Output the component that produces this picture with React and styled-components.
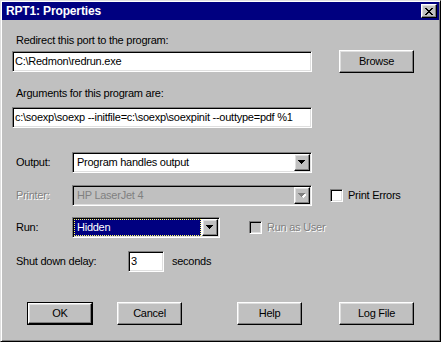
import React from 'react';
import styled, { createGlobalStyle, css } from 'styled-components';

const Global = createGlobalStyle`
  html, body { margin: 0; padding: 0; background: #c0c0c0; }
  body {
    font-family: "Liberation Sans", Arial, sans-serif;
    font-size: 11px;
    letter-spacing: -0.25px;
    color: #000;
  }
  * { box-sizing: border-box; }
`;

const sunken = css`
  border: 1px solid;
  border-color: #808080 #fff #fff #808080;
  box-shadow: inset 1px 1px #000, inset -1px -1px #dfdfdf;
`;

const raised = css`
  border: 1px solid;
  border-color: #fff #000 #000 #fff;
  box-shadow: inset -1px -1px #808080, inset 1px 1px #dfdfdf;
`;

const Window = styled.div`
  width: 441px;
  height: 342px;
  background: #c0c0c0;
  border: 1px solid;
  border-color: #dfdfdf #000 #000 #dfdfdf;
  box-shadow: inset 1px 1px #fff, inset -1px -1px #808080;
  padding: 1px;
  display: flex;
  flex-direction: column;
`;

const TitleBar = styled.div`
  height: 18px;
  background: #000080;
  display: flex;
  align-items: center;
  justify-content: space-between;
  padding: 0 2px 0 4px;
`;

const TitleText = styled.span`
  color: #fff;
  font-weight: bold;
  font-size: 12px;
  letter-spacing: -0.15px;
  line-height: 18px;
`;

const CloseButton = styled.div`
  ${raised}
  width: 16px;
  height: 14px;
  background: #c0c0c0;
  display: flex;
  align-items: center;
  justify-content: center;
`;

const Body = styled.div`
  padding: 14px 0 0 10px;
  display: flex;
  flex-direction: column;
  align-items: flex-start;
`;

const Caption = styled.div`
  line-height: 13px;
  height: 13px;
  padding-left: 4px;
  margin-top: ${p => p.$mt || 0}px;
  white-space: nowrap;
`;

const Row = styled.div`
  display: flex;
  align-items: center;
  margin-top: ${p => p.$mt || 0}px;
  height: ${p => p.$h || 21}px;
`;

const FieldLabel = styled.div`
  width: ${p => p.$w}px;
  padding-left: 4px;
  line-height: 13px;
  white-space: nowrap;
  color: ${p => (p.$disabled ? '#808080' : '#000')};
  text-shadow: ${p => (p.$disabled ? '1px 1px #fff' : 'none')};
`;

const TextField = styled.div`
  ${sunken}
  width: ${p => p.$w}px;
  height: 21px;
  margin-top: ${p => p.$mt || 0}px;
  background: #fff;
  padding: 0 2px;
  display: flex;
  align-items: center;
  white-space: nowrap;
  overflow: hidden;
  line-height: 13px;
`;

const Combo = styled.div`
  ${sunken}
  width: ${p => p.$w}px;
  height: 21px;
  padding: 1px;
  background: ${p => (p.$disabled ? '#c0c0c0' : '#fff')};
  display: flex;
`;

const ComboText = styled.div`
  flex: 1;
  display: flex;
  align-items: center;
  padding-left: 3px;
  margin-right: 1px;
  white-space: nowrap;
  overflow: hidden;
  line-height: 13px;
  color: ${p => (p.$disabled ? '#808080' : p.$focused ? '#fff' : '#000')};
  background: ${p => (p.$focused ? '#000080' : 'transparent')};
  outline: ${p => (p.$focused ? '1px dotted #ffff60' : 'none')};
  outline-offset: -1px;
`;

const DropButton = styled.div`
  ${raised}
  width: 16px;
  height: 100%;
  background: #c0c0c0;
  display: flex;
  align-items: center;
  justify-content: center;
`;

const CheckRow = styled.div`
  display: flex;
  align-items: center;
  margin-left: ${p => p.$ml}px;
`;

const CheckBox = styled.div`
  ${sunken}
  width: 13px;
  height: 13px;
  background: ${p => (p.$disabled ? '#c0c0c0' : '#fff')};
`;

const CheckLabel = styled.span`
  margin-left: 5px;
  line-height: 13px;
  white-space: nowrap;
  color: ${p => (p.$disabled ? '#808080' : '#000')};
  text-shadow: ${p => (p.$disabled ? '1px 1px #fff' : 'none')};
`;

const Suffix = styled.span`
  margin-left: 8px;
  line-height: 13px;
`;

const Button = styled.div`
  ${raised}
  width: ${p => p.$w}px;
  height: ${p => p.$h || 23}px;
  margin-left: ${p => p.$ml || 0}px;
  background: #c0c0c0;
  display: flex;
  align-items: center;
  justify-content: center;
  line-height: 13px;
`;

const DefaultFrame = styled.div`
  border: 1px solid #000;
  margin-left: ${p => p.$ml || 0}px;
  display: flex;
`;

const Arrow = ({ disabled }) => (
  <svg width="8" height="5" viewBox="0 0 8 5" shapeRendering="crispEdges">
    {disabled && <path d="M2 1h7v1H2zM3 2h5v1H3zM4 3h3v1H4zM5 4h1v1H5z" fill="#fff" />}
    <path
      d="M0 0h7v1H0zM1 1h5v1H1zM2 2h3v1H2zM3 3h1v1H3z"
      fill={disabled ? '#808080' : '#000'}
    />
  </svg>
);

const CloseGlyph = () => (
  <svg width="8" height="7" viewBox="0 0 8 7" shapeRendering="crispEdges">
    <path
      d="M0 0h2v1H0zM6 0h2v1H6zM1 1h2v1H1zM5 1h2v1H5zM2 2h4v1H2zM3 3h2v1H3zM2 4h4v1H2zM1 5h2v1H1zM5 5h2v1H5zM0 6h2v1H0zM6 6h2v1H6z"
      fill="#000"
    />
  </svg>
);

export default function App() {
  return (
    <>
      <Global />
      <Window>
        <TitleBar>
          <TitleText>RPT1: Properties</TitleText>
          <CloseButton>
            <CloseGlyph />
          </CloseButton>
        </TitleBar>
        <Body>
          <Caption>Redirect this port to the program:</Caption>
          <Row $mt={3} $h={23}>
            <TextField $w={300}>C:\Redmon\redrun.exe</TextField>
            <Button $w={75} $ml={27}>Browse</Button>
          </Row>
          <Caption $mt={14}>Arguments for this program are:</Caption>
          <TextField $w={300} $mt={7}>
            c:\soexp\soexp --initfile=c:\soexp\soexpinit --outtype=pdf %1
          </TextField>

          <Row $mt={24}>
            <FieldLabel $w={60}>Output:</FieldLabel>
            <Combo $w={240}>
              <ComboText>Program handles output</ComboText>
              <DropButton>
                <Arrow />
              </DropButton>
            </Combo>
          </Row>

          <Row $mt={12}>
            <FieldLabel $w={60} $disabled>Printer:</FieldLabel>
            <Combo $w={240} $disabled>
              <ComboText $disabled>HP LaserJet 4</ComboText>
              <DropButton>
                <Arrow disabled />
              </DropButton>
            </Combo>
            <CheckRow $ml={18}>
              <CheckBox />
              <CheckLabel>Print Errors</CheckLabel>
            </CheckRow>
          </Row>

          <Row $mt={11}>
            <FieldLabel $w={60}>Run:</FieldLabel>
            <Combo $w={148}>
              <ComboText $focused>Hidden</ComboText>
              <DropButton>
                <Arrow />
              </DropButton>
            </Combo>
            <CheckRow $ml={29}>
              <CheckBox $disabled />
              <CheckLabel $disabled>Run as User</CheckLabel>
            </CheckRow>
          </Row>

          <Row $mt={13}>
            <FieldLabel $w={116}>Shut down delay:</FieldLabel>
            <TextField $w={36}>3</TextField>
            <Suffix>seconds</Suffix>
          </Row>

          <Row $mt={30} $h={23}>
            <DefaultFrame $ml={15}>
              <Button $w={64} $h={21}>OK</Button>
            </DefaultFrame>
            <Button $w={65} $ml={24}>Cancel</Button>
            <Button $w={65} $ml={55}>Help</Button>
            <Button $w={75} $ml={37}>Log File</Button>
          </Row>
        </Body>
      </Window>
    </>
  );
}
